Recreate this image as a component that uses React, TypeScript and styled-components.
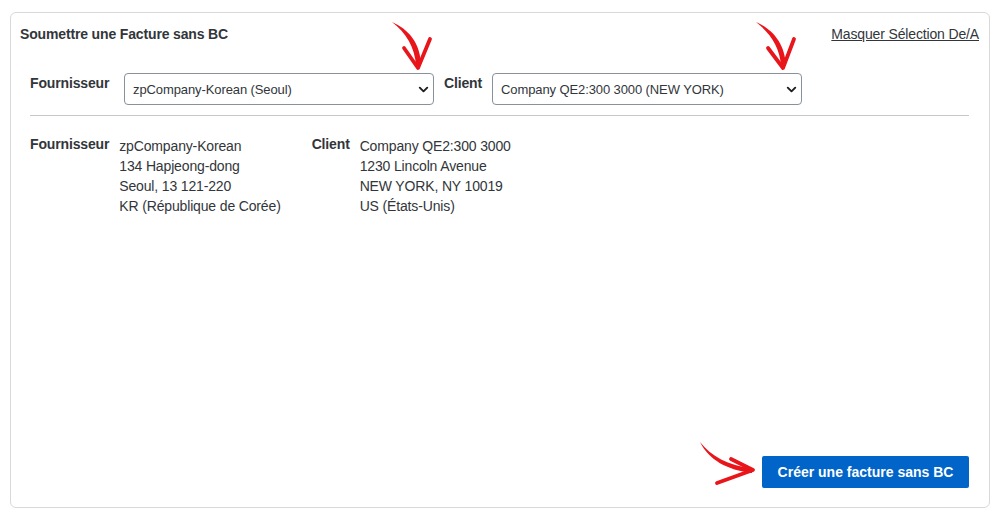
import styled, { createGlobalStyle } from "styled-components";
import { ChevronDown } from "lucide-react";

const GlobalStyle = createGlobalStyle`
  html, body {
    margin: 0;
    padding: 0;
    background: #ffffff;
  }
  body {
    font-family: "Liberation Sans", Arial, sans-serif;
    color: #32363a;
  }
`;

// tapered hand-drawn arrow: body is a filled sliver, head is two strokes
function RedArrow({ body, head }: { body: string; head: string }) {
  return (
    <>
      <path d={body} fill="#e8151b" />
      <path d={head} fill="none" stroke="#e8151b" strokeWidth={3.8} strokeLinecap="round" strokeLinejoin="round" />
    </>
  );
}

function App() {
  return (
    <>
      <GlobalStyle />
      <Page>
        <Card>
          <Header>
            <Title>Soumettre une Facture sans BC</Title>
            <ToggleLink href="#">Masquer Sélection De/A</ToggleLink>
          </Header>

          <SelectRow>
            <FieldLabel $width={84}>Fournisseur</FieldLabel>
            <SelectWrap>
              <Select defaultValue="kr">
                <option value="kr">zpCompany-Korean (Seoul)</option>
              </Select>
              <Chevron size={15} strokeWidth={3} />
            </SelectWrap>
            <FieldLabel>Client</FieldLabel>
            <SelectWrap>
              <Select defaultValue="ny">
                <option value="ny">Company QE2:300 3000 (NEW YORK)</option>
              </Select>
              <Chevron size={15} strokeWidth={3} />
            </SelectWrap>
          </SelectRow>

          <Divider />

          <Addresses>
            <AddressGroup>
              <AddressLabel>Fournisseur</AddressLabel>
              <AddressLines>
                <div>zpCompany-Korean</div>
                <div>134 Hapjeong-dong</div>
                <div>Seoul, 13 121-220</div>
                <div>KR (République de Corée)</div>
              </AddressLines>
            </AddressGroup>
            <AddressGroup>
              <AddressLabel>Client</AddressLabel>
              <AddressLines>
                <div>Company QE2:300 3000</div>
                <div>1230 Lincoln Avenue</div>
                <div>NEW YORK, NY 10019</div>
                <div>US (États-Unis)</div>
              </AddressLines>
            </AddressGroup>
          </Addresses>

          <Footer>
            <PrimaryButton type="button">Créer une facture sans BC</PrimaryButton>
          </Footer>
        </Card>

        <Annotations width="1000" height="519" viewBox="0 0 1000 519">
          <RedArrow
            body="M392 22 C 408 29, 421 43, 421 66 L 416 66 C 415 47, 406 33, 392 22 Z"
            head="M404 48 L 418 68 L 430 39"
          />
          <RedArrow
            body="M756 22 C 772 29, 785 43, 786 66 L 781 66 C 780 47, 770 33, 756 22 Z"
            head="M768 48 L 783 68 L 794 39"
          />
          <RedArrow
            body="M700 442 C 711 456, 728 466, 752 468 L 752 473 C 727 470, 709 460, 700 442 Z"
            head="M731 459 L 753 470 L 717 483"
          />
        </Annotations>
      </Page>
    </>
  );
}

export default App;

const Page = styled.div`
  position: relative;
  width: 1000px;
  height: 519px;
  padding: 12px 10px 11px;
  box-sizing: border-box;
`;

const Card = styled.div`
  height: 100%;
  box-sizing: border-box;
  border: 1px solid #d9d9d9;
  border-radius: 6px;
  display: flex;
  flex-direction: column;
  letter-spacing: -0.15px;
`;

const Header = styled.div`
  display: flex;
  justify-content: space-between;
  align-items: center;
  padding: 12px 10px 0 9px;
  line-height: 18px;
`;

const Title = styled.div`
  font-size: 14px;
  font-weight: bold;
`;

const ToggleLink = styled.a`
  font-size: 14px;
  color: #32363a;
  text-decoration: underline;
`;

const SelectRow = styled.div`
  display: flex;
  align-items: flex-start;
  gap: 10px;
  padding: 0 19px;
  margin-top: 30px;
`;

const FieldLabel = styled.div<{ $width?: number }>`
  font-size: 14px;
  font-weight: bold;
  line-height: 18px;
  padding-top: 1px;
  width: ${(p) => (p.$width ? `${p.$width}px` : "auto")};
`;

const SelectWrap = styled.div`
  position: relative;
  width: 310px;
  height: 32px;
`;

const Select = styled.select`
  appearance: none;
  width: 100%;
  height: 100%;
  box-sizing: border-box;
  border: 1px solid #89919a;
  border-radius: 4px;
  background: #ffffff;
  color: #32363a;
  font-family: "Liberation Sans", Arial, sans-serif;
  font-size: 13px;
  letter-spacing: -0.1px;
  padding: 0 28px 0 8px;
`;

const Chevron = styled(ChevronDown)`
  position: absolute;
  right: 3px;
  top: 9px;
  color: #1d1d1d;
  pointer-events: none;
`;

const Divider = styled.div`
  height: 1px;
  background: #c8c8c8;
  margin: 10px 20px 0 19px;
`;

const Addresses = styled.div`
  flex: 1;
  display: flex;
  align-items: flex-start;
  gap: 31px;
  padding: 20px 19px 0;
  font-size: 14px;
  line-height: 20px;
`;

const AddressGroup = styled.div`
  display: flex;
  gap: 10px;
`;

const AddressLabel = styled.div`
  font-weight: bold;
  margin-top: -2px;
`;

const AddressLines = styled.div`
  display: flex;
  flex-direction: column;
`;

const Footer = styled.div`
  display: flex;
  justify-content: flex-end;
  padding: 0 20px 19px;
`;

const PrimaryButton = styled.button`
  width: 207px;
  height: 32px;
  border: none;
  border-radius: 2px;
  background: #0064c8;
  color: #ffffff;
  font-family: "Liberation Sans", Arial, sans-serif;
  font-size: 14px;
  font-weight: bold;
  letter-spacing: 0;
  cursor: pointer;
`;

const Annotations = styled.svg`
  position: absolute;
  left: 0;
  top: 0;
  pointer-events: none;
`;
